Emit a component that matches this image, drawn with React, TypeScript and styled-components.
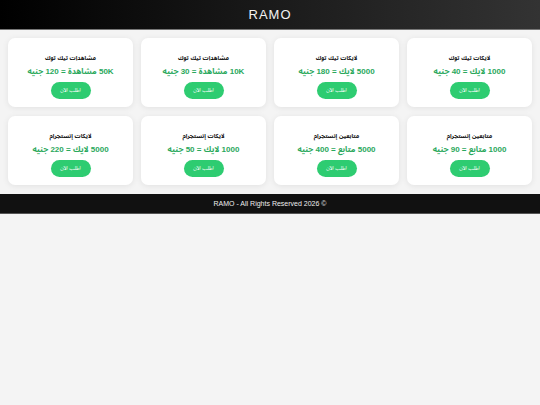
import React from "react";
import styled, { createGlobalStyle } from "styled-components";

const Global = createGlobalStyle`
  html, body { margin: 0; padding: 0; background: #f4f4f4; }
  body { font-family: "Liberation Sans", "Noto Sans Arabic", "Noto Naskh Arabic", "DejaVu Sans", Arial, sans-serif; }
  * { box-sizing: border-box; }
`;

const Page = styled.div`
  direction: rtl;
  min-height: 405px;
  background: #f4f4f4;
`;

const Header = styled.header`
  height: 30px;
  background: linear-gradient(90deg, #000 0%, #1a1a1a 50%, #333 100%);
  border-bottom: 1px solid #777;
  display: flex;
  align-items: center;
  justify-content: center;
`;

const Logo = styled.h1`
  margin: 0;
  color: #f2f2f2;
  font-size: 13px;
  font-weight: 400;
  letter-spacing: 1px;
`;

const Grid = styled.main`
  display: grid;
  grid-template-columns: repeat(4, 1fr);
  column-gap: 8px;
  row-gap: 9px;
  padding: 8px 8px 9px;
`;

const Card = styled.div`
  background: #fff;
  border-radius: 7px;
  box-shadow: 0 1px 6px rgba(0, 0, 0, 0.08);
  padding: 15px 6px 8px;
  display: flex;
  flex-direction: column;
  align-items: center;
  height: 69px;
`;

const Title = styled.h3`
  margin: 0 0 4px;
  font-size: 6px;
  line-height: 10px;
  font-weight: 700;
  color: #111;
  white-space: nowrap;
`;

const Price = styled.p`
  margin: 0 0 5px;
  font-size: 8px;
  line-height: 10px;
  font-weight: 700;
  color: #2aa85c;
  white-space: nowrap;
`;

const Button = styled.button`
  width: 40px;
  height: 17px;
  border: none;
  border-radius: 9px;
  background: #2ecc71;
  color: #fff;
  font-family: inherit;
  font-size: 5px;
  padding: 0;
  cursor: pointer;
`;

const Footer = styled.footer`
  height: 20px;
  background: #111;
  border-bottom: 1px solid #555;
  color: #eee;
  font-size: 7px;
  display: flex;
  align-items: center;
  justify-content: center;
  direction: ltr;
`;

const items = [
  { t: "لايكات تيك توك", p: "1000 لايك = 40 جنيه" },
  { t: "لايكات تيك توك", p: "5000 لايك = 180 جنيه" },
  { t: "مشاهدات تيك توك", p: "10K مشاهدة = 30 جنيه" },
  { t: "مشاهدات تيك توك", p: "50K مشاهدة = 120 جنيه" },
  { t: "متابعين إنستجرام", p: "1000 متابع = 90 جنيه" },
  { t: "متابعين إنستجرام", p: "5000 متابع = 400 جنيه" },
  { t: "لايكات إنستجرام", p: "1000 لايك = 50 جنيه" },
  { t: "لايكات إنستجرام", p: "5000 لايك = 220 جنيه" },
];

export default function App() {
  return (
    <Page>
      <Global />
      <Header>
        <Logo>RAMO</Logo>
      </Header>
      <Grid>
        {items.map((it, i) => (
          <Card key={i}>
            <Title>{it.t}</Title>
            <Price>{it.p}</Price>
            <Button>اطلب الآن</Button>
          </Card>
        ))}
      </Grid>
      <Footer>RAMO - All Rights Reserved 2026 ©</Footer>
    </Page>
  );
}
